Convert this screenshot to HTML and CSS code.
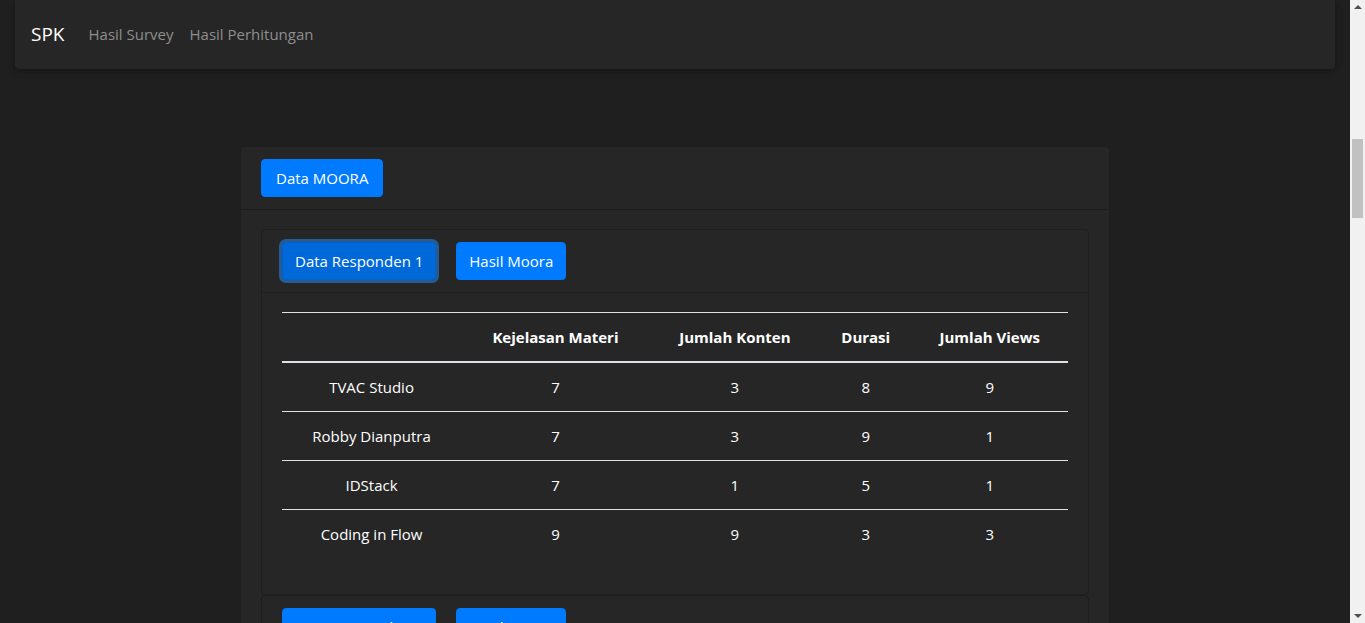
FILE: index.html
```html
<!DOCTYPE html>
<html lang="id">
<head>
<meta charset="utf-8">
<title>SPK - Data MOORA</title>
<link rel="stylesheet" href="styles.css">
</head>
<body>
<div class="page">
  <nav class="navbar">
    <a class="brand" href="#">SPK</a>
    <a class="nav-link" href="#">Hasil Survey</a>
    <a class="nav-link" href="#">Hasil Perhitungan</a>
  </nav>

  <main class="main">
    <section class="card">
      <div class="card-header">
        <button class="btn btn-wide">Data MOORA</button>
      </div>
      <div class="card-body">
        <div class="inner-card">
          <div class="inner-header">
            <button class="btn btn-focus">Data Responden 1</button>
            <button class="btn">Hasil Moora</button>
          </div>
          <div class="inner-body">
            <table class="table">
              <thead>
                <tr><th></th><th>Kejelasan Materi</th><th>Jumlah Konten</th><th>Durasi</th><th>Jumlah Views</th></tr>
              </thead>
              <tbody>
                <tr><td>TVAC Studio</td><td>7</td><td>3</td><td>8</td><td>9</td></tr>
                <tr><td>Robby Dianputra</td><td>7</td><td>3</td><td>9</td><td>1</td></tr>
                <tr><td>IDStack</td><td>7</td><td>1</td><td>5</td><td>1</td></tr>
                <tr><td>Coding in Flow</td><td>9</td><td>9</td><td>3</td><td>3</td></tr>
              </tbody>
            </table>
          </div>
        </div>
        <div class="inner-card">
          <div class="inner-header">
            <button class="btn">Data Responden 2</button>
            <button class="btn">Hasil Moora</button>
          </div>
        </div>
      </div>
    </section>
  </main>
</div>
<div class="scrollbar" aria-hidden="true">
  <span class="arrow-up"></span>
  <span class="thumb"></span>
  <span class="arrow-down"></span>
</div>
</body>
</html>
```

FILE: styles.css
```css
html, body {
  margin: 0;
  padding: 0;
}
body {
  background: #1f1f1f;
  color: #ffffff;
  font-family: "Open Sans", "Noto Sans", sans-serif;
  font-size: 15px;
  line-height: 1.5;
  overflow: hidden;
  height: 623px;
}
.page {
  margin-right: 15px;
}
.navbar {
  display: flex;
  align-items: center;
  height: 69px;
  margin: 0 15px;
  padding: 0 16px;
  background: #262626;
  border-radius: 0 0 4px 4px;
  box-shadow: 0 2px 6px rgba(0, 0, 0, 0.35);
  box-sizing: border-box;
}
.brand {
  color: #ffffff;
  text-decoration: none;
  font-size: 19px;
  margin-right: 16px;
}
.nav-link {
  color: #8e8e8e;
  text-decoration: none;
  font-size: 15px;
  padding: 0 8px;
}
.main {
  padding-top: 78px;
}
.card {
  width: 868px;
  margin: 0 auto;
  background: #262626;
  border-radius: 4px;
}
.card-header {
  padding: 12px 20px;
  border-bottom: 1px solid #1c1c1c;
}
.card-body {
  padding: 19px 20px 20px;
}
.inner-card {
  border: 1px solid #1e1e1e;
  border-radius: 4px;
}
.inner-header {
  display: flex;
  gap: 20px;
  padding: 12px 20px;
  border-bottom: 1px solid #1e1e1e;
}
.inner-body {
  padding: 19px 20px 20px;
}
.btn {
  font-family: inherit;
  font-size: 15px;
  line-height: 24px;
  color: #ffffff;
  background: #007bff;
  border: 1px solid #007bff;
  border-radius: 4px;
  padding: 6px 12px;
  cursor: pointer;
}
.btn-wide {
  padding: 6px 14px;
}
.btn-focus {
  background: #0069d9;
  border-color: #0062cc;
  box-shadow: 0 0 0 3px rgba(38, 143, 255, 0.5);
}
.table {
  width: 100%;
  border-collapse: collapse;
  margin-bottom: 16px;
}
.table th, .table td {
  padding: 12px;
  text-align: center;
  border-top: 1px solid #dee2e6;
  line-height: 24px;
}
.table th {
  font-weight: 700;
  border-bottom: 2px solid #dee2e6;
}
.table tbody tr:first-child td {
  border-top: none;
}
.scrollbar {
  position: fixed;
  top: 0;
  right: 0;
  bottom: 0;
  width: 15px;
  background: #f1f1f1;
}
.thumb {
  position: absolute;
  left: 2px;
  width: 11px;
  top: 139px;
  height: 79px;
  background: #c1c1c1;
}
.arrow-up, .arrow-down {
  position: absolute;
  left: 4px;
  width: 0;
  height: 0;
  border-left: 4px solid transparent;
  border-right: 4px solid transparent;
}
.arrow-up {
  top: 5px;
  border-bottom: 4px solid #505050;
}
.arrow-down {
  bottom: 5px;
  border-top: 4px solid #505050;
}
```
